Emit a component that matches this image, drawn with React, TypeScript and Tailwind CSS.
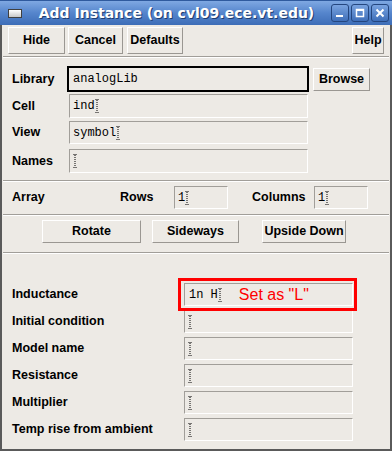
import React from 'react';

const Cursor = () => (
  <svg width="4" height="14" viewBox="0 0 4 14" className="inline-block shrink-0">
    <path d="M0.5 0.5h3M2 1v12M0.5 13.5h3" stroke="#000" strokeWidth="1" strokeDasharray="1 1" fill="none" />
  </svg>
);

const Btn = ({ label, className = '' }: { label: string; className?: string }) => (
  <div className={`flex items-center justify-center bg-[#edeae5] border-t border-l border-white border-b border-r border-b-[#9a9792] border-r-[#9a9792] text-[12.5px] font-bold text-black ${className}`}>
    {label}
  </div>
);

const Field = ({ value, className = '', cursor = true }: { value?: string; className?: string; cursor?: boolean }) => (
  <div className={`flex items-center pl-[3px] bg-[#edeae5] border-t border-l border-[#a19e99] border-b border-r border-b-white border-r-white font-['Liberation_Mono',monospace] text-[12px] text-black ${className}`}>
    {value && <span className="whitespace-pre">{value}</span>}
    {cursor && <Cursor />}
  </div>
);

const Sep = ({ className = '' }: { className?: string }) => (
  <div className={`mx-[1px] border-t border-[#a19e99] border-b border-b-white ${className}`} />
);

const WinBtn = ({ children }: { children: React.ReactNode }) => (
  <div className="w-[18px] h-[18px] rounded-[3px] border border-[#24467f] bg-gradient-to-b from-[#79a3e0] to-[#3f6fb9] flex items-center justify-center">
    {children}
  </div>
);

const lower = ['Inductance', 'Initial condition', 'Model name', 'Resistance', 'Multiplier', 'Temp rise from ambient'];

export default function App() {
  return (
    <div className="w-[392px] h-[451px] flex flex-col bg-[#edeae5] font-['Liberation_Sans',Arial,sans-serif] text-black">
      <div className="h-[25px] shrink-0 flex items-center bg-gradient-to-b from-[#7fa8e2] via-[#5585cc] to-[#3d6db7] border-t border-[#2f5a9e] px-[8px]">
        <div className="w-[14px] h-[9px] bg-gradient-to-b from-white to-[#c8c8c8] border border-[#404040]" />
        <div className="flex-1 text-center text-white font-bold text-[14px] font-['DejaVu_Sans',sans-serif] [text-shadow:1px_1px_0_#1f3d70]">
          Add Instance (on cvl09.ece.vt.edu)
        </div>
        <div className="flex gap-[2px] -mr-[5px]">
          <WinBtn>
            <svg width="10" height="10" viewBox="0 0 10 10"><rect x="1" y="7" width="7" height="2" fill="#fff" /></svg>
          </WinBtn>
          <WinBtn>
            <svg width="10" height="10" viewBox="0 0 10 10"><rect x="1.5" y="1.5" width="7" height="7" stroke="#fff" strokeWidth="1.5" fill="none" /><rect x="1" y="1" width="8" height="2" fill="#fff" /></svg>
          </WinBtn>
          <WinBtn>
            <svg width="10" height="10" viewBox="0 0 10 10"><path d="M1.5 1.5l7 7M8.5 1.5l-7 7" stroke="#fff" strokeWidth="2" /></svg>
          </WinBtn>
        </div>
      </div>

      <div className="flex-1 flex flex-col border-x-2 border-b-2 border-[#5a5a5a]">
        <div className="flex pt-[2px] px-[6px]">
          <Btn label="Hide" className="w-[57px] h-[27px]" />
          <Btn label="Cancel" className="w-[55px] h-[27px] ml-[3px]" />
          <Btn label="Defaults" className="w-[56px] h-[27px] ml-[4px]" />
          <div className="flex-1" />
          <Btn label="Help" className="w-[32px] h-[27px]" />
        </div>
        <Sep className="mt-[2px]" />

        <div className="flex items-center mt-[8px] pl-[10px]">
          <span className="w-[55px] text-[12.5px] font-bold">Library</span>
          <div className="w-[242px] h-[26px] border-2 border-black flex items-center pl-[4px] font-['Liberation_Mono',monospace] text-[12px]">analogLib</div>
          <Btn label="Browse" className="w-[57px] h-[23px] ml-[4px]" />
        </div>
        <div className="flex items-center mt-[2px] pl-[10px]">
          <span className="w-[57px] text-[12.5px] font-bold">Cell</span>
          <Field value="ind" className="w-[239px] h-[24px]" />
        </div>
        <div className="flex items-center mt-[3px] pl-[10px]">
          <span className="w-[57px] text-[12.5px] font-bold">View</span>
          <Field value="symbol" className="w-[239px] h-[23px]" />
        </div>
        <div className="flex items-center mt-[5px] pl-[10px]">
          <span className="w-[57px] text-[12.5px] font-bold">Names</span>
          <Field className="w-[239px] h-[24px]" />
        </div>
        <Sep className="mt-[7px]" />

        <div className="flex items-center mt-[4px] pl-[10px]">
          <span className="w-[108px] text-[12.5px] font-bold">Array</span>
          <span className="w-[54px] text-[12.5px] font-bold">Rows</span>
          <Field value="1" className="w-[54px] h-[23px]" />
          <span className="ml-[24px] w-[62px] text-[12.5px] font-bold">Columns</span>
          <Field value="1" className="w-[54px] h-[23px]" />
        </div>
        <Sep className="mt-[5px]" />
        <div className="flex mt-[4px] pl-[40px]">
          <Btn label="Rotate" className="w-[99px] h-[23px]" />
          <Btn label="Sideways" className="w-[87px] h-[23px] ml-[11px]" />
          <Btn label="Upside Down" className="w-[84px] h-[23px] ml-[23px]" />
        </div>
        <Sep className="mt-[9px]" />

        <div className="relative flex flex-col gap-[4px] mt-[29px] pl-[10px]">
          {lower.map((l, i) => (
            <div key={l} className="flex items-center">
              <span className="w-[172px] text-[12.5px] font-bold">{l}</span>
              {i === 0 ? (
                <div className="w-[169px] h-[23px] flex items-center pl-[4px] bg-[#edeae5] border-t border-l border-[#a19e99] border-b border-r border-b-white border-r-white">
                  <span className="font-['Liberation_Mono',monospace] text-[12px] whitespace-pre">1n H</span>
                  <Cursor />
                  <span className="ml-[17px] text-[16px] text-[#ff0000] leading-none">Set as "L"</span>
                </div>
              ) : (
                <Field className="w-[169px] h-[23px]" />
              )}
            </div>
          ))}
          <div className="absolute left-[176px] top-[-5px] w-[179px] h-[33px] border-[3px] border-[#ff0000]" />
        </div>
      </div>
    </div>
  );
}
